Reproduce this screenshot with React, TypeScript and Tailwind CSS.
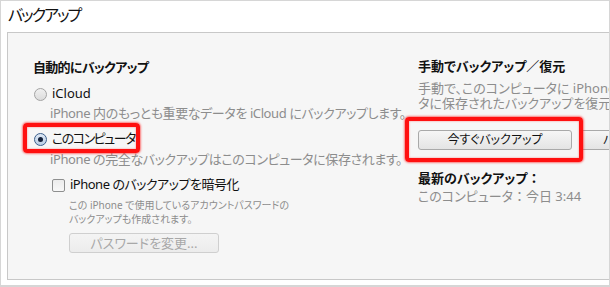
import React from 'react';

const jp = "font-['Noto_Sans','Noto_Sans_CJK_JP',sans-serif] [font-feature-settings:'palt']";

const Radio: React.FC<{ checked?: boolean }> = ({ checked }) => (
  <span
    className={`flex h-[13px] w-[13px] shrink-0 items-center justify-center rounded-full border ${
      checked ? 'border-[#3c5f8c] bg-gradient-to-b from-[#dfe9f5] to-[#b9cde4]' : 'border-[#a3a3a3] bg-gradient-to-b from-[#f0f0f0] to-[#dcdcdc]'
    }`}
  >
    {checked && <span className="h-[5px] w-[5px] rounded-full bg-[#14213a]" />}
  </span>
);

const Checkbox: React.FC = () => (
  <span className="h-[13px] w-[13px] shrink-0 rounded-[2px] border border-[#8e8f8f] bg-gradient-to-b from-[#ececec] to-[#f8f8f8]" />
);

const Button: React.FC<{ label: string; disabled?: boolean; className?: string }> = ({ label, disabled, className }) => (
  <div
    className={`flex h-[20px] shrink-0 items-center justify-center rounded-[3px] border bg-gradient-to-b leading-none ${
      disabled
        ? 'border-[#cfcfcf] from-[#f4f4f4] to-[#ececec] text-[#a8a8a8]'
        : 'border-[#a9a9a9] from-[#f6f6f6] to-[#e4e4e4] text-[#111]'
    } ${className ?? ''}`}
  >
    {label}
  </div>
);

const RedBox: React.FC<{ className: string }> = ({ className }) => (
  <div
    className={`pointer-events-none absolute rounded-[4px] border-[4px] border-[#ff1010] shadow-[0_0_2px_1px_rgba(255,40,40,0.6),inset_0_0_2px_rgba(255,40,40,0.6)] ${className}`}
  />
);

export default function App() {
  return (
    <div className={`relative h-[287px] w-[610px] overflow-hidden border border-b-2 border-[#d6d6d6] bg-white ${jp}`}>
      <div className="px-[7px] pt-[1px] text-[16px] leading-[26px] tracking-[-2px] text-[#111]">バックアップ</div>

      <div className="ml-[6px] mt-[4px] flex h-[248px] w-[620px] border border-[#c8c8c8] bg-[#f6f6f6]">
        {/* left column */}
        <div className="flex w-[385px] shrink-0 flex-col pl-[25px] pt-[24px]">
          <div className="text-[13px] font-bold leading-[20px] tracking-[-0.7px] text-[#111]">自動的にバックアップ</div>

          <div className="mt-[7px] flex h-[20px] items-center gap-[5px] pl-[1px]">
            <Radio />
            <span className="text-[13px] text-[#111]">iCloud</span>
          </div>
          <div className="whitespace-nowrap pl-[17px] text-[13px] leading-[18px] tracking-[-0.4px] text-[#8d8d8d]">
            iPhone 内のもっとも重要なデータを iCloud にバックアップします。
          </div>

          <div className="mt-[8px] flex h-[18px] items-center gap-[5px] pl-[1px]">
            <Radio checked />
            <span className="text-[13px] tracking-[-1.5px] text-[#111]">このコンピュータ</span>
          </div>
          <div className="mt-[2px] whitespace-nowrap pl-[17px] text-[13px] leading-[18px] tracking-[-0.4px] text-[#8d8d8d]">
            iPhone の完全なバックアップはこのコンピュータに保存されます。
          </div>

          <div className="mt-[8px] flex h-[18px] items-center gap-[5px] pl-[19px]">
            <Checkbox />
            <span className="text-[13px] tracking-[-0.5px] text-[#111]">iPhone のバックアップを暗号化</span>
          </div>
          <div className="mt-[4px] pl-[36px] text-[10px] leading-[14px] text-[#8d8d8d]">
            <div>この iPhone で使用しているアカウントパスワードの</div>
            <div>バックアップも作成されます。</div>
          </div>
          <div className="mt-[7px] pl-[36px]">
            <Button label="パスワードを変更..." disabled className="w-[150px] text-[13px]" />
          </div>
        </div>

        {/* right column */}
        <div className="flex flex-col pl-[25px] pt-[23px]">
          <div className="text-[13px] font-bold leading-[20px] text-[#111]">手動でバックアップ／復元</div>
          <div className="mt-[5px] whitespace-nowrap text-[13px] leading-[15px] text-[#8d8d8d]">
            <div>手動で、このコンピュータに iPhone をバックアップするか、このコンピュー</div>
            <div>タに保存されたバックアップを復元します。</div>
          </div>
          <div className="mt-[19px] flex gap-[8px]">
            <Button label="今すぐバックアップ" className="w-[154px] text-[12px]" />
            <Button label="バックアップを復元..." className="w-[154px] text-[12px]" />
          </div>
          <div className="mt-[19px] text-[13px] font-bold leading-[18px] text-[#111]">
            最新のバックアップ<span className="[font-feature-settings:normal]">：</span>
          </div>
          <div className="text-[13px] leading-[18px] text-[#8d8d8d]">
            このコンピュータ<span className="[font-feature-settings:normal]">：</span>今日 3:44
          </div>
        </div>
      </div>

      <RedBox className="left-[22px] top-[122px] h-[30px] w-[117px]" />
      <RedBox className="left-[404px] top-[116px] h-[45px] w-[178px]" />
    </div>
  );
}
